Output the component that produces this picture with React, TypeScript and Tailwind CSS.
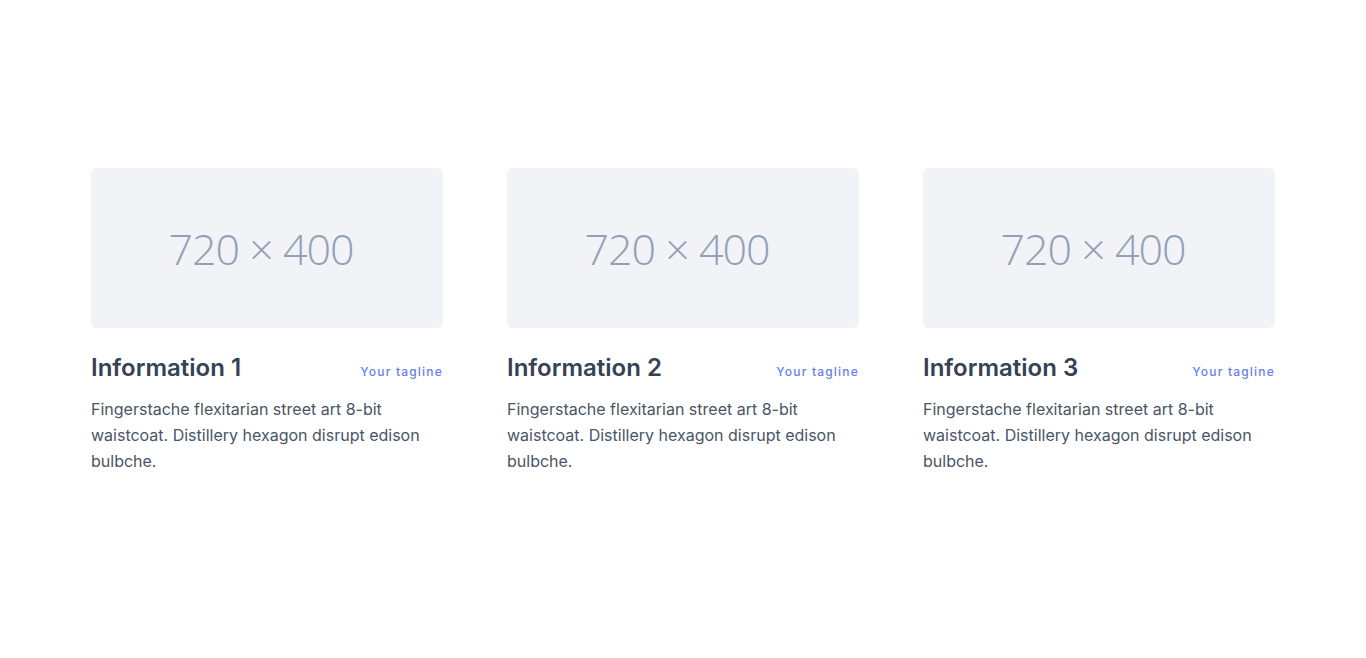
const items = [
  { title: 'Information 1' },
  { title: 'Information 2' },
  { title: 'Information 3' },
];

function Placeholder() {
  return (
    <div className="h-40 w-full rounded-md bg-[#f2f3f7] flex items-center justify-center pr-3">
      <span className="font-['Open_Sans',sans-serif] font-light text-[43px] leading-none tracking-[-1px] text-[#94a0b8]">
        720 × 400
      </span>
    </div>
  );
}

export default function App() {
  return (
    <div className="min-h-screen bg-white font-['Inter',sans-serif]">
      <section className="pt-[168px] pb-[184px]">
        <div className="mx-auto max-w-[1184px] grid grid-cols-3 gap-16">
          {items.map((item) => (
            <div key={item.title}>
              <Placeholder />
              <div className="mt-6 flex items-baseline justify-between">
                <h2 className="text-2xl font-semibold text-gray-700">{item.title}</h2>
                <span className="text-xs font-medium tracking-widest text-[#667eea]">Your tagline</span>
              </div>
              <p className="mt-3 text-base leading-relaxed text-gray-600">
                Fingerstache flexitarian street art 8-bit waistcoat. Distillery hexagon disrupt edison bulbche.
              </p>
            </div>
          ))}
        </div>
      </section>
    </div>
  );
}
